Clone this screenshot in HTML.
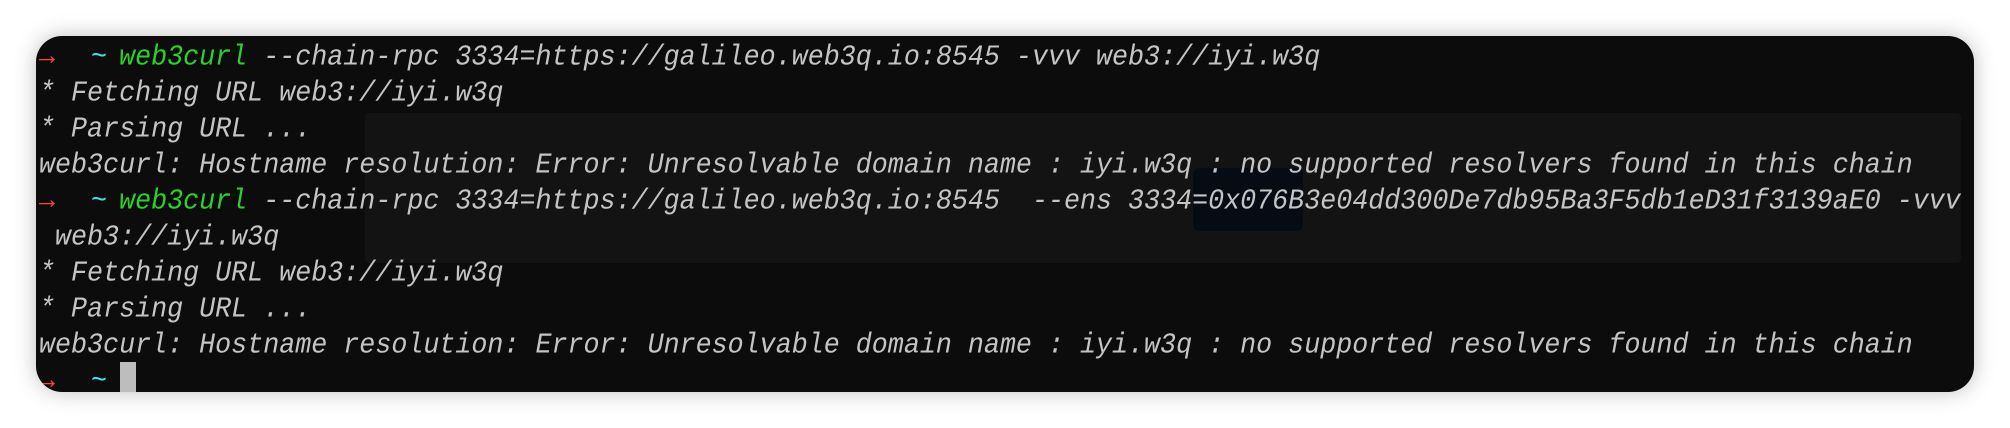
<!DOCTYPE html>
<html><head><meta charset="utf-8"><style>
html,body{margin:0;padding:0;background:#fff;width:2010px;height:428px;overflow:hidden}
.win{position:absolute;left:36px;top:36px;width:1938px;height:356px;background:#0c0c0c;border-radius:26px;box-shadow:0 0 22px rgba(0,0,0,0.25);overflow:hidden}
.hl{position:absolute;left:329px;top:77px;width:1596px;height:150px;background:#131313;border-radius:4px}
.bl{position:absolute;left:1157px;top:132px;width:110px;height:63px;background:#070c14;border-radius:6px}
.l{position:absolute;left:3px;height:36px;line-height:36px;font-family:"Liberation Mono",monospace;font-style:italic;font-size:26.7px;letter-spacing:0;color:#c4c4c4;white-space:pre;transform:scaleY(1.08);transform-origin:0 50%}
.r{color:#ff4040;font-style:normal;font-weight:bold}
.c{color:#3ee6e6;font-style:normal;position:relative;left:4px}
.g{color:#2ad12a}
.cur{position:absolute;left:84px;top:326px;width:16px;height:34px;background:#bdbdbd}
</style></head><body>
<div class="win">
<div class="hl"></div><div class="bl"></div>
<div class="l" style="top:4px"><span class="r">→</span>  <span class="c">~</span> <span class="g">web3curl</span> --chain-rpc 3334=https://galileo.web3q.io:8545 -vvv web3://iyi.w3q</div>
<div class="l" style="top:40px">* Fetching URL web3://iyi.w3q</div>
<div class="l" style="top:76px">* Parsing URL ...</div>
<div class="l" style="top:112px">web3curl: Hostname resolution: Error: Unresolvable domain name : iyi.w3q : no supported resolvers found in this chain</div>
<div class="l" style="top:148px"><span class="r">→</span>  <span class="c">~</span> <span class="g">web3curl</span> --chain-rpc 3334=https://galileo.web3q.io:8545  --ens 3334=0x076B3e04dd300De7db95Ba3F5db1eD31f3139aE0 -vvv</div>
<div class="l" style="top:184px"> web3://iyi.w3q</div>
<div class="l" style="top:220px">* Fetching URL web3://iyi.w3q</div>
<div class="l" style="top:256px">* Parsing URL ...</div>
<div class="l" style="top:292px">web3curl: Hostname resolution: Error: Unresolvable domain name : iyi.w3q : no supported resolvers found in this chain</div>
<div class="l" style="top:328px"><span class="r">→</span>  <span class="c">~</span></div>
<div class="cur"></div>
</div>
</body></html>
